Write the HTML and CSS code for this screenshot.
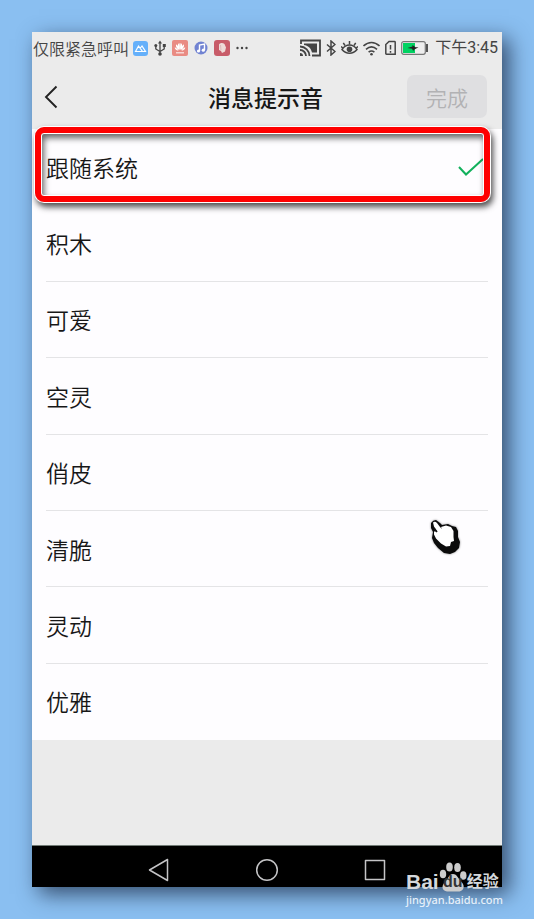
FILE: index.html
```html
<!DOCTYPE html>
<html lang="zh-CN">
<head>
<meta charset="utf-8">
<meta name="viewport" content="width=device-width, initial-scale=1">
<title>消息提示音</title>
<link rel="stylesheet" href="styles.css">
</head>
<body>
<main class="phone">
  <div class="status">
    <span>仅限紧急呼叫</span>
    <div class="status-icons notices">
      <svg width="15" height="15" viewBox="0 0 15 15"><rect width="15" height="15" rx="3" fill="#65b0fa"/><path d="M2.500 10.500 5.500 5l4 5.500zM7 7.500 9 5l3.500 5.500h-3" fill="none" stroke="#fff" stroke-width="1.200"/></svg>
      <svg width="12" height="16" viewBox="0 0 12 16" fill="none" stroke="#444" stroke-width="1.300"><path d="M6 2v12M1.800 6v3L6 11.500 10.200 9V5"/><path d="M4 3.500 6 .5l2 3z" fill="#444" stroke="none"/><circle cx="6" cy="14" r="1.800" fill="#444" stroke="none"/><circle cx="1.800" cy="5.500" r="1.500" fill="#444" stroke="none"/><path d="M8.800 4h3v3h-3z" fill="#444" stroke="none"/></svg>
      <svg width="16" height="16" viewBox="0 0 16 16"><rect width="16" height="16" rx="2" fill="#e98b83"/><g fill="#fff"><path d="M7.700 10C5 7 5.500 4 7.300 3c.7 2 .8 4 .4 7zM8.300 10C11 7 10.500 4 8.700 3c-.7 2-.8 4-.4 7zM7 10C4 8 3.500 6 4.300 4.300 6 6 6.800 8 7 10zM9 10c3-2 3.500-4 2.700-5.700C10 6 9.200 8 9 10zM6.500 10.700C4 10.500 2.700 9 2.800 7.300 4.800 8 6 9.300 6.500 10.700zM9.500 10.700c2.500-.2 3.800-1.700 3.700-3.400-2 .7-3.200 2-3.700 3.400z"/><path d="M4 12h8v1.500H4z" opacity=".65"/></g></svg>
      <svg width="14" height="14" viewBox="0 0 14 14"><circle cx="7" cy="7" r="6.500" fill="#7183d2"/><path d="M5.500 10V4l5-1v6" fill="none" stroke="#fff" stroke-width="1.400"/><circle cx="4.500" cy="10" r="1.600" fill="#fff"/><circle cx="9.300" cy="9.200" r="1.600" fill="#fff"/></svg>
      <svg width="16" height="16" viewBox="0 0 16 16"><rect width="16" height="16" rx="3" fill="#c85c69"/><path d="M5 4.500C6 2.500 9 2.500 10.500 4L12 7.500l-1 4-3 1.500-1-2-2-1z" fill="#eedad8"/><path d="m6.500 5 .5 5" stroke="#d3aaac" stroke-width=".7"/></svg>
      <svg width="13" height="4" viewBox="0 0 13 4" fill="#444"><circle cx="1.500" cy="2" r="1.200"/><circle cx="6" cy="2" r="1.200"/><circle cx="10.500" cy="2" r="1.200"/></svg>
    </div>
    <div class="status-icons system">
      <svg width="21" height="18" viewBox="0 0 21 18" fill="none" stroke="#444" stroke-width="1.800"><path d="M1 5V1.500h19v15h-8"/><path d="M4 4.500h13v9h-5C11 9 8 6.500 4 6z" fill="#444" stroke="none"/><path d="M0 7.500a9.500 9.500 0 0 1 9.500 9.500M0 11a6 6 0 0 1 6 6"/><path d="M0 14a3 3 0 0 1 3 3H0z" fill="#444" stroke="none"/></svg>
      <svg width="10" height="16" viewBox="0 0 10 16" fill="none" stroke="#444" stroke-width="1.500"><path d="m1 4.500 8 7-4 3.500V1l4 3.500-8 7"/></svg>
      <svg width="17" height="16" viewBox="0 0 17 16" fill="none" stroke="#444" stroke-width="1.500"><path d="M1 9.500c4-6 11-6 15 0-4 5-11 5-15 0z"/><circle cx="8.500" cy="9.300" r="2.800" fill="#444" stroke="none"/><path d="M8.500 4.500V1M4 5.500 2.300 2.800M13 5.500l1.700-2.700M2 8 0 6.500M15 8l2-1.500"/></svg>
      <svg width="17" height="15" viewBox="0 0 17 15" fill="none" stroke="#444" stroke-width="1.600"><path d="M.5 5c5-4.500 11-4.500 16 0M3 8.300c3.500-3 7.500-3 11 0M5.600 11.200c2-1.600 3.800-1.600 5.800 0"/><circle cx="8.500" cy="13.200" r="1.300" fill="#444" stroke="none"/></svg>
      <svg width="11" height="16" viewBox="0 0 11 16" fill="none" stroke="#444" stroke-width="1.500"><path d="M4 1.500h5.500q.7 0 .7.700v12H1.500q-.7 0-.7-.7V4.500zM5.500 5v4.500M5.500 11v1.700"/></svg>
      <svg width="28" height="14" viewBox="0 0 28 14"><rect x=".7" y=".7" width="23.600" height="12.600" rx="2" fill="#eee" stroke="#777" stroke-width="1.200"/><path d="M2 2h12v10H2z" fill="#00d261"/><path d="M25 3h2v8h-2" fill="#555"/><path d="m6.500 7 5-1.500V4l3 2.200h3L12.500 9v1.500L11 7.800z" fill="#222"/></svg>
    </div>
    <time class="clock">下午3:45</time>
  </div>
  <header class="bar">
    <button class="back" type="button" aria-label="返回"><svg width="14" height="24" viewBox="0 0 14 24"><path d="M12.500 1.500 2 12l10.500 10.500" fill="none" stroke="#222" stroke-width="1.900"/></svg></button>
    <h1>消息提示音</h1>
    <button class="done" type="button" disabled>完成</button>
  </header>
  <form class="tones">
    <label class="tone marked"><span>跟随系统</span><input type="radio" name="tone" checked><svg class="tick" width="26" height="18" viewBox="0 0 26 18"><path d="m1 9 7 7.500L25 1" fill="none" stroke="#12b15c" stroke-width="2"/></svg></label>
    <label class="tone"><span>积木</span><input type="radio" name="tone"></label>
    <label class="tone"><span>可爱</span><input type="radio" name="tone"></label>
    <label class="tone"><span>空灵</span><input type="radio" name="tone"></label>
    <label class="tone"><span>俏皮</span><input type="radio" name="tone"></label>
    <label class="tone"><span>清脆</span><input type="radio" name="tone"></label>
    <label class="tone"><span>灵动</span><input type="radio" name="tone"></label>
    <label class="tone"><span>优雅</span><input type="radio" name="tone"></label>
    <svg class="hand" width="30" height="34" viewBox="0 0 30 34"><path d="M0 3Q2 0 5 0l4 3 2 2 6-1 4 2 4 1 2 4 0 6 2 5-1 6-4 4-5 2-6-1-6-5-4-5-2-5 1-6-2-4z" fill="#0b0b0b"/><path d="M2 2.500Q4 1 6 3l3 4 2 2-1-2 5-1.500 5 1.500 2.500 4v6l.5 4-3 1-1 4-4 0.500-5-3-5-5-2-4 0-3 3 0-3-5z" fill="#fff"/><path d="m3 8 3 4" stroke="#111" stroke-width="1.500"/></svg>
  </form>
  <nav class="keys">
    <button type="button" aria-label="返回键"><svg width="24" height="24" viewBox="0 0 24 24"><path d="M2.500 12 20.500 1.500v21z"/></svg></button>
    <button type="button" aria-label="主屏幕"><svg width="24" height="24" viewBox="0 0 24 24"><circle cx="12" cy="12" r="10.300"/></svg></button>
    <button type="button" aria-label="最近任务"><svg width="24" height="24" viewBox="0 0 24 24"><rect x="2.500" y="2.500" width="19" height="19"/></svg></button>
  </nav>
</main>
<div class="watermark">
  <div class="brand">
    <span class="latin">Bai</span>
    <span class="paw"><svg width="28" height="30" viewBox="0 0 28 30" fill="#ccc"><ellipse cx="4" cy="12" rx="3.200" ry="4.300"/><ellipse cx="10.500" cy="5" rx="3.300" ry="4.500"/><ellipse cx="18.500" cy="5.500" rx="3.300" ry="4.500"/><ellipse cx="24.300" cy="13.500" rx="3.200" ry="4.300"/><path d="M14 12c4 0 5.500 5 8.500 8 4 4 2 9-2 9.500H8c-5-.5-6-5.500-2-9.500 3-3 4-8 8-8z"/></svg><span class="du">du</span></span>
    <span class="cn">经验</span>
  </div>
  <div class="site">jingyan.baidu.com</div>
</div>
</body>
</html>
```
FILE: styles.css
```css
* { box-sizing: border-box; }

body {
  position: relative;
  margin: 0;
  min-height: 100vh;
  padding: 32px;
  display: flex;
  background: #8abff1;
  color: #171717;
  font-family: "Noto Sans CJK SC", sans-serif;
  font-weight: 350;
}

button {
  margin: 0;
  padding: 0;
  border: 0;
  background: none;
  font: inherit;
}

svg { display: block; flex: none; }

.phone {
  flex: 1;
  min-width: 0;
  display: flex;
  flex-direction: column;
  background: #ebebeb;
  box-shadow: 7px 7px 20px rgba(25, 40, 65, .75);
}

.status {
  display: flex;
  align-items: center;
  height: 32px;
  padding: 0 4px 0 1px;
  color: #444;
  font-size: 16px;
  line-height: 24px;
  white-space: nowrap;
}

.status-icons { display: flex; align-items: center; }
.notices { gap: 6px; margin-left: 4px; }
.system { gap: 5px; margin-left: auto; }
.clock { margin-left: 6px; font-family: Roboto, "Noto Sans CJK SC", sans-serif; font-weight: 400; }

.bar {
  display: grid;
  grid-template-columns: 80px 1fr 80px;
  align-items: center;
  height: 65px;
  padding: 0 15px 0 12px;
}

.bar h1 {
  margin: 0;
  font-size: 23px;
  font-weight: 500;
  line-height: 32px;
  text-align: center;
}

.back { justify-self: start; }

.done {
  height: 43px;
  border-radius: 7px;
  background: #dfdfe1;
  color: #b2b2b4;
  font-size: 21px;
}

.tones {
  position: relative;
  flex: 1;
  display: grid;
  grid-auto-rows: 1fr;
  margin-bottom: 105px;
  background: #fefdff;
}

.tone {
  position: relative;
  display: flex;
  align-items: center;
  justify-content: space-between;
  min-height: 60px;
  margin: 0 14px;
  border-bottom: 1px solid #e4e4e6;
  font-size: 23px;
  line-height: 32px;
}

.tone.marked, .tone:last-of-type { border-bottom-color: transparent; }

.tone input {
  position: absolute;
  inset: 0;
  margin: 0;
  appearance: none;
}

.tick { margin-right: 4px; }

.marked::after {
  content: "";
  position: absolute;
  inset: -2px -2px 2px -11px;
  border: 6px solid #fe0000;
  border-radius: 9px;
  box-shadow: 0 0 0 1px #fff, 2px 4px 6px 1px rgba(0, 0, 0, .7), inset 0 0 0 1px #fff, inset 2px 4px 6px 1px rgba(0, 0, 0, .6);
}

.hand {
  position: absolute;
  right: 41px;
  top: 64%;
  filter: drop-shadow(0 0 1px #888);
}

.keys {
  display: flex;
  justify-content: center;
  align-items: center;
  gap: 84px;
  height: 42px;
  padding-top: 6px;
  border-top: 1px solid #717b76;
  background: #000;
}

.keys svg { fill: none; stroke: #c4c4c6; stroke-width: 1.5; stroke-linejoin: round; }

.watermark {
  position: absolute;
  right: 31px;
  bottom: 12px;
  color: #d4d8dc;
  font-family: "Liberation Sans", "Noto Sans CJK SC", sans-serif;
}

.brand {
  display: flex;
  align-items: flex-end;
  font-weight: 700;
  line-height: 20px;
}

.latin { font-size: 21px; }
.paw { position: relative; }
.du { position: absolute; inset: auto 0 0; color: #333; font-size: 16px; line-height: 20px; text-align: center; }
.cn { font-size: 16px; }
.site { margin-top: 1px; color: #e6f0fa; font-family: "Noto Sans", sans-serif; font-size: 11px; font-weight: 500; line-height: 14px; }
```
